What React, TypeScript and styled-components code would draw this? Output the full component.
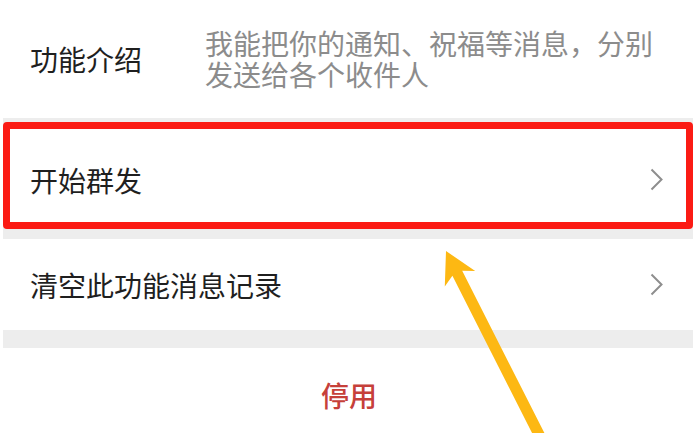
import React from "react";
import styled, { createGlobalStyle } from "styled-components";

const GlobalStyle = createGlobalStyle`
  html, body {
    margin: 0;
    padding: 0;
    background: #ffffff;
    font-family: "Noto Sans CJK SC", "Noto Sans", sans-serif;
    overflow: hidden;
  }
`;

const Page = styled.div`
  position: relative;
  width: 698px;
  height: 433px;
  overflow: hidden;
  background: #ffffff;
`;

const List = styled.div`
  margin: 0 5px 0 3px;
  background: #ededed;
  display: flex;
  flex-direction: column;
`;

const Intro = styled.div`
  height: 118px;
  background: #ffffff;
  display: flex;
  align-items: center;
  padding-left: 27px;
  box-sizing: border-box;
`;

const Label = styled.div`
  width: 175px;
  flex-shrink: 0;
  font-size: 28px;
  color: #1f1f1f;
  line-height: 1;
`;

const Desc = styled.div`
  font-size: 28px;
  line-height: 31px;
  color: #8c8c8c;
  width: 470px;
  margin-top: -1px;
`;

const Row = styled.div<{ $highlighted?: boolean; $h: number; $gap: number }>`
  height: ${(p) => p.$h}px;
  margin-top: ${(p) => p.$gap}px;
  background: #ffffff;
  display: flex;
  align-items: center;
  justify-content: space-between;
  box-sizing: border-box;
  padding: 0 30px 0 27px;
  border: ${(p) => (p.$highlighted ? "7px solid #fb1b14" : "none")};
  border-radius: ${(p) => (p.$highlighted ? "4px" : "0")};
  ${(p) => p.$highlighted && "padding: 8px 23px 0 20px;"}
`;

const RowText = styled.span`
  font-size: 28px;
  color: #1f1f1f;
  line-height: 1;
`;

const Footer = styled.div`
  margin: 18px -5px 0 -3px;
  height: 94px;
  background: #ffffff;
  display: flex;
  align-items: center;
  justify-content: center;
`;

const Danger = styled.span`
  font-size: 28px;
  color: #c6403a;
  font-weight: 500;
  line-height: 1;
`;

const Overlay = styled.svg`
  position: absolute;
  left: 0;
  top: 0;
  pointer-events: none;
`;

const Chevron = () => (
  <svg width="13" height="23" viewBox="0 0 13 23">
    <polyline points="1.5,1.5 11.5,11.5 1.5,21.5" fill="none" stroke="#8e8e8e" strokeWidth="2" />
  </svg>
);

export default function App() {
  return (
    <Page>
      <GlobalStyle />
      <List>
        <Intro>
          <Label>功能介绍</Label>
          <Desc>我能把你的通知、祝福等消息，分别发送给各个收件人</Desc>
        </Intro>
        <Row $highlighted $h={107} $gap={4}>
          <RowText>开始群发</RowText>
          <Chevron />
        </Row>
        <Row $h={91} $gap={10}>
          <RowText>清空此功能消息记录</RowText>
          <Chevron />
        </Row>
        <Footer>
          <Danger>停用</Danger>
        </Footer>
      </List>
      <Overlay width="698" height="433" viewBox="0 0 698 433">
        <polygon
          points="446,251 475.2,271 462.2,270.8 552.6,449.2 542.8,454.2 452.4,275.8 444.8,286.4"
          fill="#fdb813"
        />
      </Overlay>
    </Page>
  );
}
